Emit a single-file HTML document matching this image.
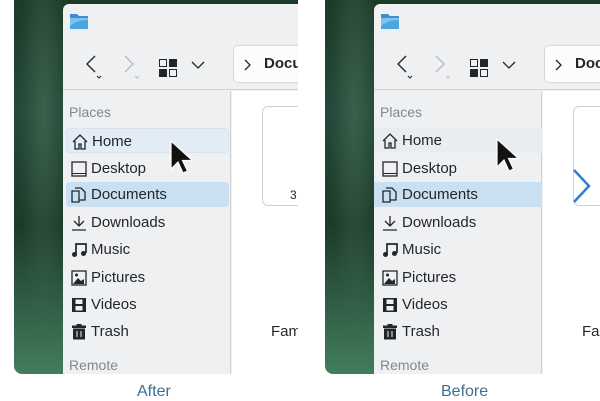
<!DOCTYPE html>
<html><head><style>
*{margin:0;padding:0;box-sizing:border-box}
body{width:600px;height:400px;background:#fff;position:relative;overflow:hidden;font-family:"Liberation Sans","DejaVu Sans",sans-serif;color:#232629}
.panel{position:absolute;top:0;height:374px;overflow:hidden;border-radius:0 0 0 8px;background:linear-gradient(180deg,#1c3a28 0%,#24483a 30%,#1c3a29 60%,#427d5c 100%)}
.panel::before{content:"";position:absolute;left:0;top:0;width:49px;height:100%;background:radial-gradient(ellipse at 60% 30%,rgba(80,120,90,.5),transparent 60%)}
.win{position:absolute;left:49px;top:4px;width:260px;height:380px;background:#eff0f1;border-radius:6px 0 0 0}
.tb{position:absolute;left:0;top:0;width:100%;height:86px;border-bottom:1px solid #d0d3d6}
.side{position:absolute;left:0;top:87px;width:168px;height:300px;border-right:1px solid #cfd2d5}
.content{position:absolute;left:169px;top:87px;width:200px;height:300px;background:#fff}
.it{position:absolute;left:3px;width:163px;height:25px;font-size:15px;line-height:25px;padding-left:25px;border-radius:4px}
.it svg{position:absolute;left:5px;top:5px}
.hd{position:absolute;left:6px;font-size:14px;color:#7f8a8e}
.crumb{position:absolute;left:170px;top:41px;width:100px;height:38px;background:#fcfcfc;border:1px solid #d5d7d9;border-radius:5px;font-size:15px;font-weight:bold;line-height:36px;padding-left:30px}
.lbl{position:absolute;top:383px;font-size:16px;color:#3a6f96}
</style></head><body>

<div class="panel" style="left:14px;width:284px">
<div class="win">
 <div class="tb">
  <svg style="position:absolute;left:6px;top:8px" width="20" height="18"><path d="M1 2h7l2 2h9v13H1z" fill="#3d8fd1"/><path d="M1 6h18v11H1z" fill="#7cc4ee"/><path d="M1 14c5-4 10-6 18-6v9H1z" fill="#4aa6e0"/></svg>
  <svg style="position:absolute;left:18px;top:48px" width="30" height="30"><path d="M14 4 6 12l8 8" stroke="#232629" stroke-width="1.4" fill="none"/><path d="M16 24l2 2 2-2" stroke="#232629" fill="none"/></svg>
  <svg style="position:absolute;left:56px;top:48px" width="30" height="30"><path d="M6 4l8 8-8 8" stroke="#b8bcbf" stroke-width="1.4" fill="none"/><path d="M16 24l2 2 2-2" stroke="#b8bcbf" fill="none"/></svg>
  <svg style="position:absolute;left:95px;top:54px" width="20" height="20"><rect x="1.5" y="1.5" width="7" height="7" fill="none" stroke="#232629"/><rect x="11" y="1" width="8" height="8" fill="#232629"/><rect x="1" y="11" width="8" height="8" fill="#232629"/><rect x="11.5" y="11.5" width="7" height="7" fill="none" stroke="#232629"/></svg>
  <svg style="position:absolute;left:128px;top:56px" width="14" height="10"><path d="M1 2l6 6 6-6" stroke="#232629" stroke-width="1.3" fill="none"/></svg>
  <div class="crumb"><svg style="position:absolute;left:10px;top:13px" width="8" height="12"><path d="M1 1l5 5-5 5" stroke="#232629" stroke-width="1.3" fill="none"/></svg>Documents</div>
 </div>
 <div class="side">
  <div class="hd" style="top:13px">Places</div>
  <div class="it" style="top:37px;background:#e3ecf4;border:1px solid #d6e4f0"><svg width="16" height="16"><path d="M1 8 8 1l7 7M3 7v8h4v-5h2v5h4V7" stroke="#232629" fill="none" stroke-width="1.3"/></svg>Home</div>
  <div class="it" style="top:65px"><svg width="16" height="16"><rect x="1" y="1" width="14" height="14" fill="none" stroke="#232629" stroke-width="1.3"/><path d="M1 12.5h14" stroke="#232629"/></svg>Desktop</div>
  <div class="it" style="top:91px;background:#c9e0f2"><svg width="16" height="16"><path d="M1 4h7v11H1zM4 1h6l4 4v8H8" stroke="#232629" fill="none" stroke-width="1.3"/></svg>Documents</div>
  <div class="it" style="top:119px"><svg width="16" height="16"><path d="M8 1v9M3 6l5 5 5-5M1 15h14" stroke="#232629" fill="none" stroke-width="1.3"/></svg>Downloads</div>
  <div class="it" style="top:146px"><svg width="16" height="16"><path d="M5 12V2h10v9" stroke="#232629" fill="none" stroke-width="1.7"/><circle cx="3.5" cy="12.5" r="2.5" fill="#232629"/><circle cx="12.5" cy="11.5" r="2.5" fill="#232629"/></svg>Music</div>
  <div class="it" style="top:174px"><svg width="16" height="16"><rect x="1" y="1" width="14" height="14" fill="none" stroke="#232629" stroke-width="1.3"/><path d="M2 14l5-6 3 3 3-2v5z" fill="#232629"/><circle cx="5.5" cy="5" r="1.5" fill="#232629"/></svg>Pictures</div>
  <div class="it" style="top:201px"><svg width="16" height="16"><rect x="1" y="1" width="14" height="14" fill="#232629"/><rect x="4.5" y="2.5" width="7" height="4.5" fill="#eff0f1"/><rect x="4.5" y="9" width="7" height="4.5" fill="#eff0f1"/></svg>Videos</div>
  <div class="it" style="top:228px"><svg width="16" height="16"><rect x="1" y="1.5" width="14" height="2.5" fill="#232629"/><rect x="5.5" y="0" width="5" height="2" fill="#232629"/><rect x="2" y="4.5" width="12" height="11" fill="#232629"/><path d="M6 7v6M10 7v6" stroke="#eff0f1"/></svg>Trash</div>
  <div class="hd" style="top:266px">Remote</div>
 </div>
 <div class="content">
  <div style="position:absolute;left:30px;top:15px;width:80px;height:100px;border:1px solid #c5d3de;border-radius:6px"></div>
  <div style="position:absolute;left:58px;top:97px;font-size:12px">3</div>
  <div style="position:absolute;left:39px;top:232px;font-size:15px">Family</div>
 </div>
</div>
</div>

<div class="panel" style="left:325px;width:275px">
<div class="win">
 <div class="tb">
  <svg style="position:absolute;left:6px;top:8px" width="20" height="18"><path d="M1 2h7l2 2h9v13H1z" fill="#3d8fd1"/><path d="M1 6h18v11H1z" fill="#7cc4ee"/><path d="M1 14c5-4 10-6 18-6v9H1z" fill="#4aa6e0"/></svg>
  <svg style="position:absolute;left:18px;top:48px" width="30" height="30"><path d="M14 4 6 12l8 8" stroke="#232629" stroke-width="1.4" fill="none"/><path d="M16 24l2 2 2-2" stroke="#232629" fill="none"/></svg>
  <svg style="position:absolute;left:56px;top:48px" width="30" height="30"><path d="M6 4l8 8-8 8" stroke="#b8bcbf" stroke-width="1.4" fill="none"/><path d="M16 24l2 2 2-2" stroke="#b8bcbf" fill="none"/></svg>
  <svg style="position:absolute;left:95px;top:54px" width="20" height="20"><rect x="1.5" y="1.5" width="7" height="7" fill="none" stroke="#232629"/><rect x="11" y="1" width="8" height="8" fill="#232629"/><rect x="1" y="11" width="8" height="8" fill="#232629"/><rect x="11.5" y="11.5" width="7" height="7" fill="none" stroke="#232629"/></svg>
  <svg style="position:absolute;left:128px;top:56px" width="14" height="10"><path d="M1 2l6 6 6-6" stroke="#232629" stroke-width="1.3" fill="none"/></svg>
  <div class="crumb"><svg style="position:absolute;left:10px;top:13px" width="8" height="12"><path d="M1 1l5 5-5 5" stroke="#232629" stroke-width="1.3" fill="none"/></svg>Documents</div>
 </div>
 <div class="side">
  <div class="hd" style="top:13px">Places</div>
  <div class="it" style="top:37px;left:0;width:168px;border-radius:0;background:#e9edf1"><svg width="16" height="16" style="left:8px"><path d="M1 8 8 1l7 7M3 7v8h4v-5h2v5h4V7" stroke="#232629" fill="none" stroke-width="1.3"/></svg><span style="padding-left:3px">Home</span></div>
  <div class="it" style="top:65px"><svg width="16" height="16"><rect x="1" y="1" width="14" height="14" fill="none" stroke="#232629" stroke-width="1.3"/><path d="M1 12.5h14" stroke="#232629"/></svg>Desktop</div>
  <div class="it" style="top:91px;left:0;width:168px;border-radius:0;background:#c9e0f2"><svg width="16" height="16" style="left:8px"><path d="M1 4h7v11H1zM4 1h6l4 4v8H8" stroke="#232629" fill="none" stroke-width="1.3"/></svg><span style="padding-left:3px">Documents</span></div>
  <div class="it" style="top:119px"><svg width="16" height="16"><path d="M8 1v9M3 6l5 5 5-5M1 15h14" stroke="#232629" fill="none" stroke-width="1.3"/></svg>Downloads</div>
  <div class="it" style="top:146px"><svg width="16" height="16"><path d="M5 12V2h10v9" stroke="#232629" fill="none" stroke-width="1.7"/><circle cx="3.5" cy="12.5" r="2.5" fill="#232629"/><circle cx="12.5" cy="11.5" r="2.5" fill="#232629"/></svg>Music</div>
  <div class="it" style="top:174px"><svg width="16" height="16"><rect x="1" y="1" width="14" height="14" fill="none" stroke="#232629" stroke-width="1.3"/><path d="M2 14l5-6 3 3 3-2v5z" fill="#232629"/><circle cx="5.5" cy="5" r="1.5" fill="#232629"/></svg>Pictures</div>
  <div class="it" style="top:201px"><svg width="16" height="16"><rect x="1" y="1" width="14" height="14" fill="#232629"/><rect x="4.5" y="2.5" width="7" height="4.5" fill="#eff0f1"/><rect x="4.5" y="9" width="7" height="4.5" fill="#eff0f1"/></svg>Videos</div>
  <div class="it" style="top:228px"><svg width="16" height="16"><rect x="1" y="1.5" width="14" height="2.5" fill="#232629"/><rect x="5.5" y="0" width="5" height="2" fill="#232629"/><rect x="2" y="4.5" width="12" height="11" fill="#232629"/><path d="M6 7v6M10 7v6" stroke="#eff0f1"/></svg>Trash</div>
  <div class="hd" style="top:266px">Remote</div>
 </div>
 <div class="content">
  <div style="position:absolute;left:30px;top:15px;width:80px;height:100px;border:1px solid #c5d3de;border-radius:6px"></div>
  <svg style="position:absolute;left:29px;top:77px" width="20" height="40"><path d="M2 2l15 16L2 34" stroke="#2f7fd0" stroke-width="2.5" fill="none"/></svg>
  <div style="position:absolute;left:39px;top:232px;font-size:15px">Family</div>
 </div>
</div>
</div>

<svg style="position:absolute;left:169px;top:139px" width="26" height="36"><path d="M2 2v28l7-7 5 11 4.5-2-5-10.5h10z" fill="#111" stroke="#fff" stroke-width="1.2"/></svg>
<svg style="position:absolute;left:495px;top:137px" width="26" height="36"><path d="M2 2v28l7-7 5 11 4.5-2-5-10.5h10z" fill="#111" stroke="#fff" stroke-width="1.2"/></svg>

<div class="lbl" style="left:137px">After</div>
<div class="lbl" style="left:441px">Before</div>
</body></html>
